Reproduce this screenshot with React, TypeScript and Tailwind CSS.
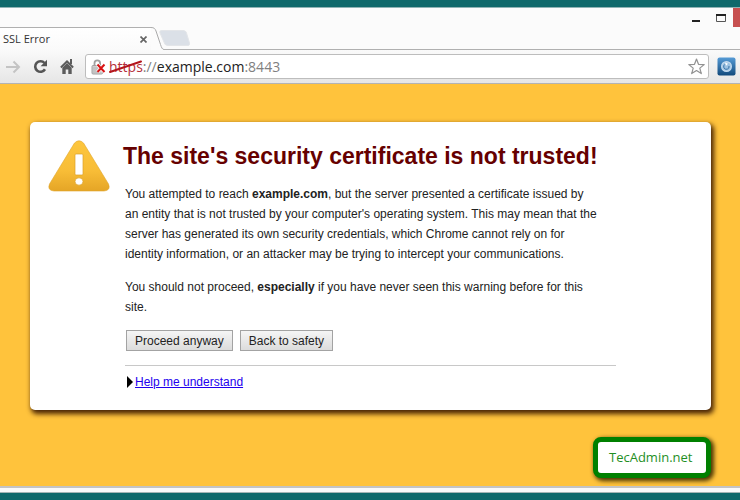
import type { ReactNode } from 'react'

const PARAGRAPH = 'text-[12px] leading-5 text-[#222]'

function IconButton({ label, className = '', children }: { label: string; className?: string; children?: ReactNode }) {
  return (
    <button type="button" aria-label={label} className={`flex shrink-0 items-center justify-center ${className}`}>
      {children}
    </button>
  )
}

function TitleBar() {
  return (
    <div className="flex h-[19px] items-start justify-end bg-[#fbfbfb]">
      <IconButton label="Minimize" className="h-5 w-[26px]">
        <svg width="8" height="12" viewBox="0 0 8 12" fill="#222">
          <path d="M0 8h8v2H0z" />
        </svg>
      </IconButton>
      <IconButton label="Maximize" className="h-5 w-6">
        <svg width="10" height="8" viewBox="0 0 10 8" fill="none">
          <path d="M.5.5h9v7h-9z" stroke="#555" />
          <path d="M0 0h10v2H0z" fill="#222" />
        </svg>
      </IconButton>
      <IconButton label="Close window" className="h-[19px] w-[7px] bg-[#c75050]" />
    </div>
  )
}

function TabStrip() {
  return (
    <div className="flex h-[23px] bg-[#fbfbfb]">
      <div className="flex w-[151px] items-center justify-between border-t border-[#b0b0b0] bg-gradient-to-b from-white to-[#fafafa] pl-[3px]">
        <span className="text-[11px] text-[#333]">SSL Error</span>
        <IconButton label="Close tab" className="h-4 w-4">
          <svg width="7" height="7" viewBox="0 0 7 7" stroke="#666" strokeWidth="1.7">
            <path d="M.5.5l6 6M6.5.5l-6 6" />
          </svg>
        </IconButton>
      </div>
      <svg width="13" height="23" viewBox="0 0 13 23" className="shrink-0">
        <path d="M0 .5C3 .5 4 1.500 5 4l4.500 13.500c1 3 1.800 5 3.500 5V23H0z" fill="#fcfcfc" />
        <path d="M0 .5C3 .5 4 1.500 5 4l4.500 13.500c1 3 1.800 5 3.500 5" fill="none" stroke="#aaa" />
      </svg>
      <div className="flex flex-1 items-center border-b border-[#b0b0b0]">
        <IconButton label="New tab" className="-ml-[5px]">
          <svg width="31" height="16" viewBox="0 0 31 16">
            <path d="M3 .5h21c2 0 3 1 3.500 2.500l3 10c.4 1.500 0 2.500-1.500 2.500H9c-2 0-3-.8-3.600-2.500L1 3C.4 1.300 1 .5 3 .5z" fill="#dbe0e7" stroke="#e3e5e8" />
          </svg>
        </IconButton>
      </div>
    </div>
  )
}

function LockIcon() {
  return (
    <svg width="15" height="16" viewBox="0 0 15 16" className="shrink-0">
      <path d="M3.500 7V4.200a2.800 2.800 0 0 1 5.600 0V7" fill="none" stroke="#a0a0a0" strokeWidth="1.800" />
      <rect x="1" y="6.500" width="10.500" height="8.500" rx="1" fill="#cfcfcf" stroke="#a2a2a2" />
      <path d="M2 9h8M2 11h8M2 13h8" stroke="#b3b3b3" strokeWidth=".8" />
      <path d="M6.500 5.500l7 7.500M13.500 5.500l-7 7.500" stroke="#fff" strokeWidth="3.400" />
      <path d="M6.500 5.500l7 7.500M13.500 5.500l-7 7.500" stroke="#d81313" strokeWidth="2" />
    </svg>
  )
}

function Toolbar() {
  return (
    <div className="flex h-[34px] items-center border-b border-[#b3b3b3] bg-gradient-to-b from-[#fafafa] to-[#e6e6e6] pr-1">
      <IconButton label="Forward" className="ml-[5px] h-6 w-4">
        <svg width="15" height="14" viewBox="0 0 15 14" fill="none" stroke="#c4c4c4" strokeWidth="2">
          <path d="M0 7h13M7.500 1.500L13 7l-5.500 5.500" />
        </svg>
      </IconButton>
      <IconButton label="Reload" className="ml-[11px] h-6 w-4">
        <svg width="15" height="15" viewBox="0 0 15 15">
          <path d="M12 10.300A5.300 5.300 0 1 1 11.500 4" fill="none" stroke="#555" strokeWidth="2.600" />
          <path d="M14 .8v6.400H7.600z" fill="#555" />
        </svg>
      </IconButton>
      <IconButton label="Home" className="ml-[11px] h-6 w-4">
        <svg width="14" height="15" viewBox="0 0 14 15" fill="#5c5c5c">
          <path d="M10 0h2v5h-2z" />
          <path d="M7 1L.2 7.800l1.300 1.400L7 3.700l5.500 5.500 1.300-1.400z" />
          <path d="M7 4L2.300 8.700V15h3.400v-4.500h2.600V15h3.400V8.700z" />
        </svg>
      </IconButton>
      <div className="ml-[10px] flex h-[25px] flex-1 items-center rounded-[3px] border border-[#bdbdbd] bg-white pl-[5px] pr-1">
        <LockIcon />
        <div className="relative ml-[3px] flex-1 whitespace-nowrap text-[14px] leading-5 text-[#808080]">
          <span className="text-[#b5303a]">https</span>://<span className="text-[#222]">example.com</span>:8443
          <svg width="34" height="14" viewBox="0 0 34 14" className="absolute left-0 top-[3px]">
            <path d="M1 12L32 1.500" stroke="#b3151c" strokeWidth="2" strokeLinecap="round" />
          </svg>
        </div>
        <IconButton label="Bookmark this page" className="h-5 w-4">
          <svg width="17" height="17" viewBox="0 0 17 17" className="shrink-0">
            <path d="M8.500 1l2 5.300 5.700.3-4.400 3.500 1.500 5.500-4.800-3.100-4.800 3.100 1.500-5.500L.8 6.600l5.700-.3z" fill="#fff" stroke="#929292" strokeWidth="1.200" strokeLinejoin="round" />
          </svg>
        </IconButton>
      </div>
      <IconButton label="Extension" className="ml-2">
        <svg width="19" height="19" viewBox="0 0 19 19">
          <defs>
            <linearGradient id="ext" x1="0" y1="0" x2="0" y2="1">
              <stop offset="0" stopColor="#559bd6" />
              <stop offset="1" stopColor="#124a7c" />
            </linearGradient>
          </defs>
          <rect x=".5" y=".5" width="18" height="18" rx="2" fill="url(#ext)" />
          <circle cx="9.500" cy="9.500" r="4.800" fill="#9cc2e2" stroke="#c3daee" strokeWidth="1.400" />
          <path d="M8 7.300a2.700 2.700 0 1 0 4 1.700" fill="none" stroke="#3a74a8" strokeWidth="1" />
          <path d="M8 5.500l3 1.300-2 2z" fill="#fff" />
        </svg>
      </IconButton>
    </div>
  )
}

function WarningIcon() {
  return (
    <svg width="62" height="52" viewBox="0 0 62 52" className="shrink-0">
      <defs>
        <linearGradient id="warn" x1="0" y1="0" x2="0" y2="1">
          <stop offset="0" stopColor="#fdc63d" />
          <stop offset=".6" stopColor="#f8bd37" />
          <stop offset="1" stopColor="#e5a526" />
        </linearGradient>
      </defs>
      <path d="M26.500 3Q31-1.500 35.500 3L60.500 44Q63 50.500 56 51H6Q-1 50.500 1.500 44z" fill="url(#warn)" stroke="#dfa52c" strokeWidth=".6" />
      <rect x="27" y="14" width="8" height="21" rx="1" fill="#fff" stroke="#dba029" strokeWidth=".7" />
      <ellipse cx="31" cy="41.500" rx="4" ry="3.700" fill="#fff" stroke="#dba029" strokeWidth=".7" />
    </svg>
  )
}

function ActionButton({ children }: { children: ReactNode }) {
  return (
    <button
      type="button"
      className="h-[21px] border border-[#a3a3a3] bg-gradient-to-b from-[#f5f5f5] to-[#dcdcdc] px-2 text-[12px] leading-4 text-[#222]"
    >
      {children}
    </button>
  )
}

function WarningCard() {
  return (
    <main className="flex items-start rounded-[5px] bg-white pb-5 pl-[18px] pr-5 pt-[18px] font-['Liberation_Sans',Arial,sans-serif] shadow-[2px_3px_5px_1px_#4a2505]">
      <WarningIcon />
      <div className="ml-[15px] max-w-[491px] flex-1">
        <h1 className="-ml-[2px] text-[23px] font-bold leading-8 text-[#660000]">
          The site's security certificate is not trusted!
        </h1>
        <p className={`${PARAGRAPH} mt-3`}>
          You attempted to reach <b>example.com</b>, but the server presented a certificate issued by
          <br />
          an entity that is not trusted by your computer's operating system. This may mean that the
          <br />
          server has generated its own security credentials, which Chrome cannot rely on for
          <br />
          identity information, or an attacker may be trying to intercept your communications.
        </p>
        <p className={`${PARAGRAPH} mt-[13px]`}>
          You should not proceed, <b>especially</b> if you have never seen this warning before for this
          <br />
          site.
        </p>
        <div className="ml-px mt-[13px] flex gap-[7px]">
          <ActionButton>Proceed anyway</ActionButton>
          <ActionButton>Back to safety</ActionButton>
        </div>
        <div className="mt-[14px] flex items-center border-t border-[#c8c8c8] pl-[2px] pt-2">
          <svg width="6" height="12" viewBox="0 0 6 12">
            <path d="M0 0l6 6-6 6z" fill="#000" />
          </svg>
          <a href="#help" className="ml-[2px] text-[12px] leading-4 text-[#2200ee] underline">
            Help me understand
          </a>
        </div>
      </div>
    </main>
  )
}

export default function App() {
  return (
    <div className="flex min-h-screen flex-col border-y-[7px] border-[#0f696b] bg-[#ffc33c] font-['Open_Sans','Noto_Sans',sans-serif]">
      <header className="border-t border-[#8fb3b4]">
        <TitleBar />
        <TabStrip />
        <Toolbar />
      </header>
      <div className="flex flex-1 flex-col pb-2 pl-[30px] pr-[29px] pt-[38px]">
        <WarningCard />
        <div className="mt-[27px] flex h-[41px] w-[118px] items-center self-end rounded-[8px] border-[5px] border-[#008000] bg-white pl-[11px] text-[13px] text-[#1f8f1f] shadow-[2px_2px_4px_1px_#4a3505]">
          TecAdmin.net
        </div>
      </div>
      <footer className="h-[7px] border-b border-t-2 border-b-[#a5b5b5] border-t-[#c4c4c4] bg-[#fafafa]" />
    </div>
  )
}
